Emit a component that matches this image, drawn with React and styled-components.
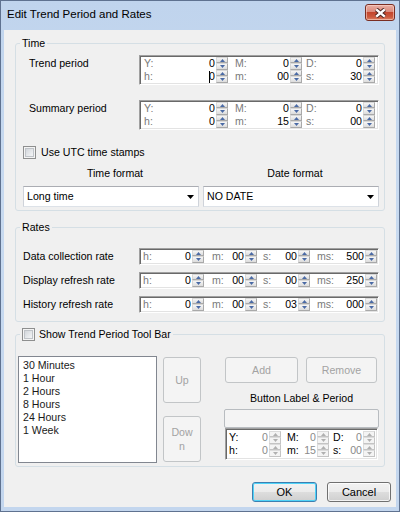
import React from 'react';
import styled, { createGlobalStyle } from 'styled-components';

const Global = createGlobalStyle`
  html, body { margin: 0; padding: 0; background: #f0f0f0; }
  body {
    font-family: "Liberation Sans", Arial, sans-serif;
    font-size: 10.6px;
    color: #000;
  }
`;

const Window = styled.div`
  box-sizing: border-box;
  width: 400px;
  height: 512px;
  border: 1px solid #5f7290;
  background: linear-gradient(#c0d4ed, #c8daf0 40%, #c3d6ee);
  padding: 0 3px 4px 3px;
  display: flex;
  flex-direction: column;
`;

const TitleBar = styled.div`
  height: 29px;
  flex: none;
  display: flex;
  align-items: flex-start;
`;

const Title = styled.div`
  font-size: 11.5px;
  line-height: 15px;
  padding: 6px 0 0 3px;
  color: #000;
`;

const CloseBtn = styled.div`
  box-sizing: border-box;
  margin: 3px 1px 0 auto;
  width: 30px;
  height: 17px;
  border: 1px solid #7a2e22;
  border-radius: 3px;
  background: linear-gradient(#e9aea3 0%, #db8b7c 45%, #c3462d 50%, #cc5a3e 80%, #dc8366 100%);
  box-shadow: inset 0 0 0 1px rgba(255, 220, 210, 0.55);
  display: flex;
  align-items: center;
  justify-content: center;
`;

const Content = styled.div`
  flex: 1;
  background: #f0f0f0;
  display: flex;
  flex-direction: column;
  padding: 13px 11px 0 11px;
`;

const Group = styled.div`
  box-sizing: border-box;
  flex: none;
  height: ${(p) => p.$h}px;
  margin-top: ${(p) => p.$mt || 0}px;
  border: 1px solid #d5dfe5;
  border-radius: 3px;
  display: flex;
  flex-direction: column;
`;

const Legend = styled.div`
  align-self: flex-start;
  display: flex;
  align-items: center;
  gap: 4px;
  height: 13px;
  line-height: 13px;
  margin: -7px 0 -6px 4px;
  padding: 0 2px;
  background: #f0f0f0;
`;

const Row = styled.div`
  display: flex;
  align-items: flex-start;
  margin-top: ${(p) => p.$mt || 0}px;
  padding-left: ${(p) => p.$pl || 0}px;
`;

const RowLabel = styled.div`
  flex: none;
  width: ${(p) => p.$w}px;
  line-height: 13px;
  margin-top: 2px;
`;

const SpinBox = styled.div`
  box-sizing: border-box;
  flex: none;
  width: ${(p) => p.$w}px;
  margin-left: ${(p) => p.$ml || 0}px;
  border: 1px solid;
  border-color: #a0a0a0 #ffffff #ffffff #a0a0a0;
  box-shadow: inset 1px 1px 0 #696969, inset -1px -1px 0 #e3e3e3;
  background: #fff;
  padding: ${(p) => p.$pv || 1}px 1px;
  display: flex;
  flex-direction: column;
`;

const BoxRow = styled.div`
  display: flex;
  height: 13px;
`;

const Field = styled.div`
  flex: none;
  width: ${(p) => p.$w}px;
  height: 13px;
  display: flex;
  align-items: center;
`;

const FLabel = styled.span`
  margin-left: ${(p) => p.$ml}px;
  line-height: 13px;
  color: ${(p) => (p.$dis ? '#000' : '#7a7a7a')};
`;

const FValue = styled.span`
  flex: 1;
  display: flex;
  justify-content: flex-end;
  align-items: center;
  padding-right: 1px;
  line-height: 13px;
  color: ${(p) => (p.$dis ? '#8a8a8a' : '#000')};
`;

const Caret = styled.span`
  display: inline-block;
  width: 1px;
  height: 12px;
  background: #000;
  margin-right: -1px;
  position: relative;
  z-index: 1;
`;

const Spin = styled.span`
  flex: none;
  width: 12px;
  height: 13px;
  display: flex;
  flex-direction: column;
`;

const SpinHalf = styled.span`
  box-sizing: border-box;
  height: ${(p) => p.$h}px;
  flex: none;
  display: flex;
  align-items: center;
  justify-content: center;
  border: 1px solid;
  border-color: ${(p) => (p.$dis ? '#dcdcdc #c4c4c4 #c4c4c4 #dcdcdc' : '#d8d8d8 #a9a9a9 #a9a9a9 #d8d8d8')};
  background: ${(p) => (p.$dis ? '#f4f4f4' : 'linear-gradient(#f6f6f6, #dcdcdc)')};
`;

const CheckRow = styled.div`
  display: flex;
  align-items: center;
  gap: 5px;
  height: 13px;
  margin-top: ${(p) => p.$mt || 0}px;
  padding-left: ${(p) => p.$pl || 0}px;
  line-height: 13px;
`;

const Check = styled.span`
  box-sizing: border-box;
  flex: none;
  width: 13px;
  height: 13px;
  border: 1px solid #8e8f8f;
  background: linear-gradient(135deg, #c9cdd3 0%, #eef0f2 70%, #f8f8f8 100%);
  box-shadow: inset 0 0 0 1px #f4f4f4, inset 0 0 0 2px #bfc3c8;
`;

const FormatGrid = styled.div`
  display: grid;
  grid-template-columns: 176px 176px;
  column-gap: 4px;
  margin-top: ${(p) => p.$mt || 0}px;
  padding-left: 7px;
`;

const FormatLabel = styled.div`
  text-align: center;
  padding-left: 8px;
  line-height: 13px;
  height: 13px;
`;

const Combo = styled.div`
  box-sizing: border-box;
  height: 21px;
  border: 1px solid;
  border-color: #abadb3 #cfd3da #dde2e8 #cfd3da;
  background: #fff;
  display: flex;
  align-items: center;
  justify-content: space-between;
  padding: 0 4px 0 3px;
  line-height: 13px;
`;

const ListBox = styled.div`
  box-sizing: border-box;
  flex: none;
  width: 139px;
  height: 107px;
  margin-left: 2px;
  border: 1px solid #828790;
  background: #fff;
  padding: 2px 0 0 4px;
`;

const ListItem = styled.div`
  line-height: 13px;
  height: 13px;
  color: #1a1a1a;
`;

const Col = styled.div`
  flex: none;
  display: flex;
  flex-direction: column;
  width: ${(p) => p.$w}px;
  margin-left: ${(p) => p.$ml || 0}px;
`;

const Btn = styled.div`
  box-sizing: border-box;
  flex: none;
  width: ${(p) => p.$w}px;
  height: ${(p) => p.$h}px;
  margin-top: ${(p) => p.$mt || 0}px;
  margin-left: ${(p) => p.$ml || 0}px;
  border: 1px solid ${(p) => (p.$dis ? '#c2c5c7' : p.$focus ? '#3c7fb1' : '#707070')};
  border-radius: 3px;
  background: ${(p) =>
    p.$dis ? '#f4f4f4' : 'linear-gradient(#f2f2f2 0%, #ebebeb 48%, #dddddd 52%, #cfcfcf 100%)'};
  box-shadow: ${(p) =>
    p.$focus ? 'inset 0 0 0 1px #4fd3f8' : p.$dis ? 'none' : 'inset 0 0 0 1px rgba(255,255,255,0.75)'};
  color: ${(p) => (p.$dis ? '#a3a3a3' : '#000')};
  display: flex;
  align-items: center;
  justify-content: center;
  text-align: center;
  line-height: 14px;
  font-size: ${(p) => (p.$big ? '11px' : '10.6px')};
`;

const BtnRow = styled.div`
  display: flex;
  margin-top: ${(p) => p.$mt || 0}px;
`;

const CenterLabel = styled.div`
  text-align: center;
  line-height: 13px;
  height: 13px;
  margin-top: ${(p) => p.$mt || 0}px;
`;

const TextBox = styled.div`
  box-sizing: border-box;
  height: 19px;
  margin-top: ${(p) => p.$mt || 0}px;
  border: 1px solid #b8bcc0;
  border-radius: 2px;
  background: #f4f4f4;
`;

const Footer = styled.div`
  display: flex;
  justify-content: flex-end;
  gap: 10px;
  margin-top: 15px;
  padding-right: 5px;
  margin-right: -11px;
`;

const Tri = ({ up, color }) => (
  <svg width="5" height="3" viewBox="0 0 5 3" style={{ display: 'block' }}>
    <path d={up ? 'M0 3 L2.5 0 L5 3 Z' : 'M0 0 L5 0 L2.5 3 Z'} fill={color} />
  </svg>
);

const Spinner = ({ dis }) => {
  const c = dis ? '#b0b0b0' : '#4a6aa5';
  return (
    <Spin>
      <SpinHalf $h={6} $dis={dis}>
        <Tri up color={c} />
      </SpinHalf>
      <SpinHalf $h={7} $dis={dis}>
        <Tri color={c} />
      </SpinHalf>
    </Spin>
  );
};

const SpinGrid = ({ cols, rows, width, ml, pv, dis }) => (
  <SpinBox $w={width} $ml={ml} $pv={pv}>
    {rows.map((r, i) => (
      <BoxRow key={i}>
        {r.map((f, j) => (
          <Field key={j} $w={cols[j].w}>
            <FLabel $ml={cols[j].ml} $dis={dis}>{f.l}</FLabel>
            <FValue $dis={dis}>
              {f.caret && <Caret />}
              {f.v}
            </FValue>
            <Spinner dis={dis} />
          </Field>
        ))}
      </BoxRow>
    ))}
  </SpinBox>
);

const ComboArrow = () => (
  <svg width="7" height="4" viewBox="0 0 7 4" style={{ display: 'block' }}>
    <path d="M0 0 L7 0 L3.5 4 Z" fill="#000" />
  </svg>
);

const periodCols = [
  { w: 87, ml: 3 },
  { w: 74, ml: 7 },
  { w: 73, ml: 4 },
];
const rateCols = [
  { w: 63, ml: 2 },
  { w: 53, ml: 8 },
  { w: 53, ml: 6 },
  { w: 67, ml: 7 },
];
const smallCols = [
  { w: 54, ml: 2 },
  { w: 48, ml: 6 },
  { w: 46, ml: 4 },
];

const trendRows = [
  [{ l: 'Y:', v: '0' }, { l: 'M:', v: '0' }, { l: 'D:', v: '0' }],
  [{ l: 'h:', v: '0', caret: true }, { l: 'm:', v: '00' }, { l: 's:', v: '30' }],
];
const summaryRows = [
  [{ l: 'Y:', v: '0' }, { l: 'M:', v: '0' }, { l: 'D:', v: '0' }],
  [{ l: 'h:', v: '0' }, { l: 'm:', v: '15' }, { l: 's:', v: '00' }],
];
const rates = [
  { label: 'Data collection rate', v: ['0', '00', '00', '500'] },
  { label: 'Display refresh rate', v: ['0', '00', '00', '250'] },
  { label: 'History refresh rate', v: ['0', '00', '03', '000'] },
];
const rateLabels = ['h:', 'm:', 's:', 'ms:'];
const periods = ['30 Minutes', '1 Hour', '2 Hours', '8 Hours', '24 Hours', '1 Week'];

export default function App() {
  return (
    <>
      <Global />
      <Window>
        <TitleBar>
          <Title>Edit Trend Period and Rates</Title>
          <CloseBtn>
            <svg width="13" height="10" viewBox="0 0 13 10">
              <path d="M2.2 1.3 L10.8 8.7 M10.8 1.3 L2.2 8.7" stroke="#4a2520" strokeWidth="4.2" />
              <path d="M2.2 1.3 L10.8 8.7 M10.8 1.3 L2.2 8.7" stroke="#ffffff" strokeWidth="2.4" />
            </svg>
          </CloseBtn>
        </TitleBar>
        <Content>
          <Group $h={168}>
            <Legend>Time</Legend>
            <Row $mt={11} $pl={13}>
              <RowLabel $w={110}>Trend period</RowLabel>
              <SpinGrid cols={periodCols} rows={trendRows} width={240} />
            </Row>
            <Row $mt={15} $pl={13}>
              <RowLabel $w={110}>Summary period</RowLabel>
              <SpinGrid cols={periodCols} rows={summaryRows} width={240} />
            </Row>
            <CheckRow $mt={16} $pl={7}>
              <Check />
              <span>Use UTC time stamps</span>
            </CheckRow>
            <FormatGrid $mt={8}>
              <FormatLabel>Time format</FormatLabel>
              <FormatLabel>Date format</FormatLabel>
            </FormatGrid>
            <FormatGrid $mt={6}>
              <Combo>
                <span>Long time</span>
                <ComboArrow />
              </Combo>
              <Combo>
                <span>NO DATE</span>
                <ComboArrow />
              </Combo>
            </FormatGrid>
          </Group>

          <Group $h={95} $mt={16}>
            <Legend>Rates</Legend>
            {rates.map((r, i) => (
              <Row key={r.label} $mt={i === 0 ? 20 : 7} $pl={7}>
                <RowLabel $w={116}>{r.label}</RowLabel>
                <SpinGrid
                  cols={rateCols}
                  rows={[r.v.map((v, j) => ({ l: rateLabels[j], v }))]}
                  width={240}
                />
              </Row>
            ))}
          </Group>

          <Group $h={133} $mt={12}>
            <Legend>
              <Check />
              <span>Show Trend Period Tool Bar</span>
            </Legend>
            <Row $mt={21}>
              <ListBox>
                {periods.map((p) => (
                  <ListItem key={p}>{p}</ListItem>
                ))}
              </ListBox>
              <Col $w={38} $ml={6}>
                <Btn $dis $w={38} $h={46} $mt={1}>Up</Btn>
                <Btn $dis $w={38} $h={46} $mt={13}>
                  Dow
                  <br />n
                </Btn>
              </Col>
              <Col $w={155} $ml={23}>
                <BtnRow $mt={1}>
                  <Btn $dis $w={73} $h={26} $ml={1}>Add</Btn>
                  <Btn $dis $w={71} $h={26} $ml={8}>Remove</Btn>
                </BtnRow>
                <CenterLabel $mt={9}>Button Label &amp; Period</CenterLabel>
                <TextBox $mt={4} />
                <SpinGrid dis cols={smallCols} rows={summaryRows} width={153} ml={1} pv={2} />
              </Col>
            </Row>
          </Group>

          <Footer>
            <Btn $focus $big $w={65} $h={20}>OK</Btn>
            <Btn $big $w={64} $h={20}>Cancel</Btn>
          </Footer>
        </Content>
      </Window>
    </>
  );
}
